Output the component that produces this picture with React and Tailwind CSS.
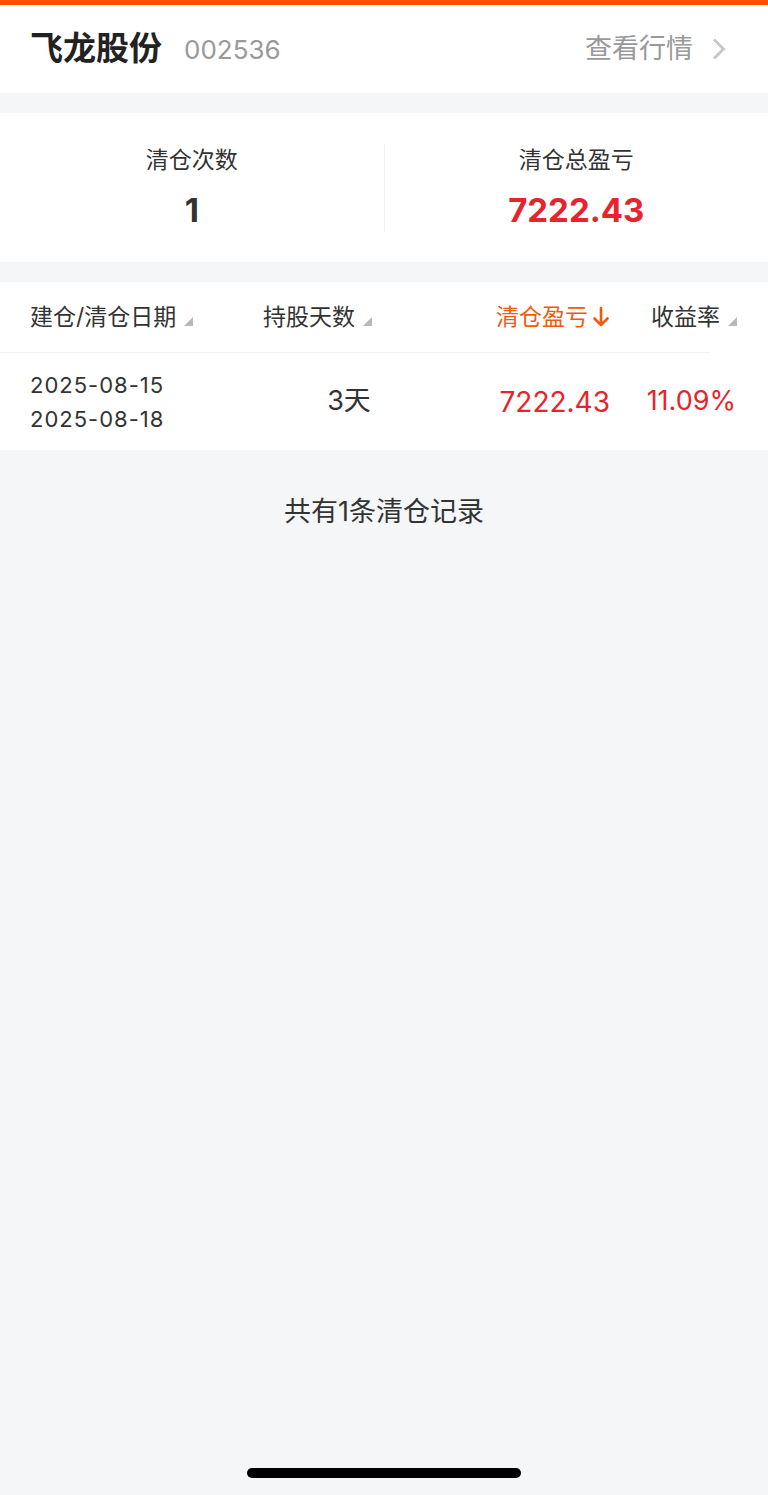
const SortTri = () => (
    <svg width="9" height="9" viewBox="0 0 9 9" className="ml-[8px] mt-[8px]">
        <polygon points="9,0 9,9 0,9" fill="#b8b8b8" />
    </svg>
);

const App = () => {
    return (
        <div className="w-[768px] min-h-[1495px] bg-[#f5f6f8] flex flex-col text-[#333]"
             style={{fontFamily: 'Inter, "Noto Sans CJK SC", sans-serif'}}>
            <div className="h-[5px] bg-[#ff5000]" />
            <div className="h-[88px] bg-white flex items-center px-[30px]">
                <span className="text-[33px] font-bold text-[#222]">飞龙股份</span>
                <span className="ml-[22px] text-[26px] text-[#999]">002536</span>
                <div className="ml-auto flex items-center text-[27px] text-[#999]">
                    查看行情
                    <svg width="14" height="22" viewBox="0 0 14 22" className="ml-[19px] mr-[12px]">
                        <path d="M2 1.5 L11.5 11 L2 20.5" stroke="#c8c8c8" strokeWidth="3" fill="none" strokeLinejoin="miter" />
                    </svg>
                </div>
            </div>

            <div className="mt-[20px] h-[149px] bg-white flex items-center">
                <div className="flex-1 flex flex-col items-center">
                    <span className="text-[23px] text-[#333] leading-none">清仓次数</span>
                    <span className="mt-[22px] text-[33px] font-bold text-[#333] leading-none">1</span>
                </div>
                <div className="w-px h-[88px] bg-[#f0f0f0]" />
                <div className="flex-1 flex flex-col items-center">
                    <span className="text-[23px] text-[#333] leading-none">清仓总盈亏</span>
                    <span className="mt-[22px] text-[33px] font-bold text-[#e8232b] leading-none">7222.43</span>
                </div>
            </div>

            <div className="mt-[20px] bg-white">
                <div className="h-[70px] flex items-center text-[23px] text-[#333]">
                    <div className="pl-[30px] w-[263px] flex items-center">建仓/清仓日期<SortTri /></div>
                    <div className="w-[233px] flex items-center">持股天数<SortTri /></div>
                    <div className="w-[155px] flex items-center text-[#f05a0a]">
                        清仓盈亏
                        <svg width="18" height="22" viewBox="0 0 18 22" className="ml-[4px]">
                            <path d="M9 2 V19 M2.5 12.5 L9 19 L15.5 12.5" stroke="#f05a0a" strokeWidth="2.6" fill="none" strokeLinecap="round" strokeLinejoin="round" />
                        </svg>
                    </div>
                    <div className="flex items-center">收益率<SortTri /></div>
                </div>
                <div className="w-[710px] h-px bg-[#f2f2f2]" />
                <div className="h-[97px] flex items-center">
                    <div className="pl-[30px] w-[263px] flex flex-col text-[22px] leading-[34px] text-[#333] tracking-[1px]">
                        <span>2025-08-15</span>
                        <span>2025-08-18</span>
                    </div>
                    <div className="w-[172px] text-center text-[27px] text-[#333]">3天</div>
                    <div className="w-[175px] text-right text-[28px] text-[#e8232b]">7222.43</div>
                    <div className="w-[126px] text-right text-[27px] text-[#e8232b]">11.09%</div>
                </div>
            </div>

            <div className="mt-[42px] text-center text-[27px] text-[#333]">共有1条清仓记录</div>

            <div className="mt-auto mb-[17px] flex justify-center">
                <div className="w-[274px] h-[10px] rounded-full bg-black" />
            </div>
        </div>
    );
};

export default App;
